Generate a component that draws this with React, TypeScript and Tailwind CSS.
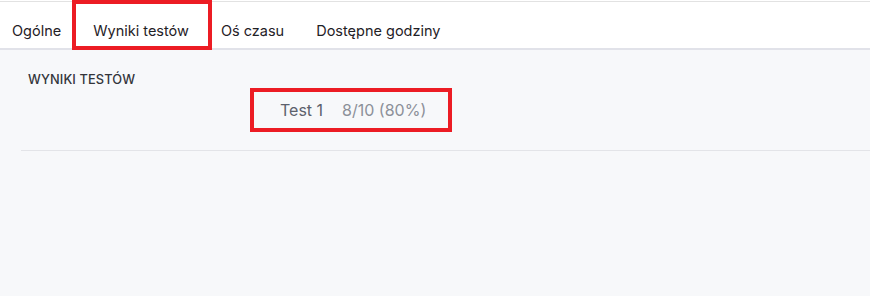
const tabs = ['Ogólne', 'Wyniki testów', 'Oś czasu', 'Dostępne godziny']

export default function App() {
  return (
    <div
      className="flex h-[296px] w-[870px] flex-col overflow-hidden bg-[#f7f8fa]"
      style={{ fontFamily: 'Inter, "Noto Sans", sans-serif' }}
    >
      <div className="h-px bg-white" />
      <div className="flex h-[49px] gap-[32px] border-t border-b-2 border-t-[#e2e2e2] border-b-[#e1e2e9] bg-white pl-[12px] text-[14.5px] text-[#1f2126]">
        {tabs.map((t) => (
          <div key={t} className="relative flex h-full items-center pt-[12px]">
            {t}
            {t === 'Wyniki testów' && (
              <span className="pointer-events-none absolute -top-[2px] -bottom-[2px] -left-[21px] -right-[23px] border-4 border-[#ec1c24]" />
            )}
          </div>
        ))}
      </div>
      <div className="pl-[21px]">
        <div className="pl-[7px] pt-[22px] text-[12.8px] leading-[16px] font-medium tracking-[0.01em] text-[#33353a]">
          WYNIKI TESTÓW
        </div>
        <div className="flex pl-[259px] pt-[10px] pb-[28px] text-[16px] leading-[24px]">
          <div className="relative flex gap-[19px]">
            <span className="text-[#5c616c]">Test 1</span>
            <span className="text-[#8c9099]">8/10 (80%)</span>
            <span className="pointer-events-none absolute -top-[10px] -bottom-[10px] -left-[30px] -right-[26px] border-4 border-[#ec1c24]" />
          </div>
        </div>
        <div className="h-px bg-[#e3e4e8]" />
      </div>
    </div>
  )
}
